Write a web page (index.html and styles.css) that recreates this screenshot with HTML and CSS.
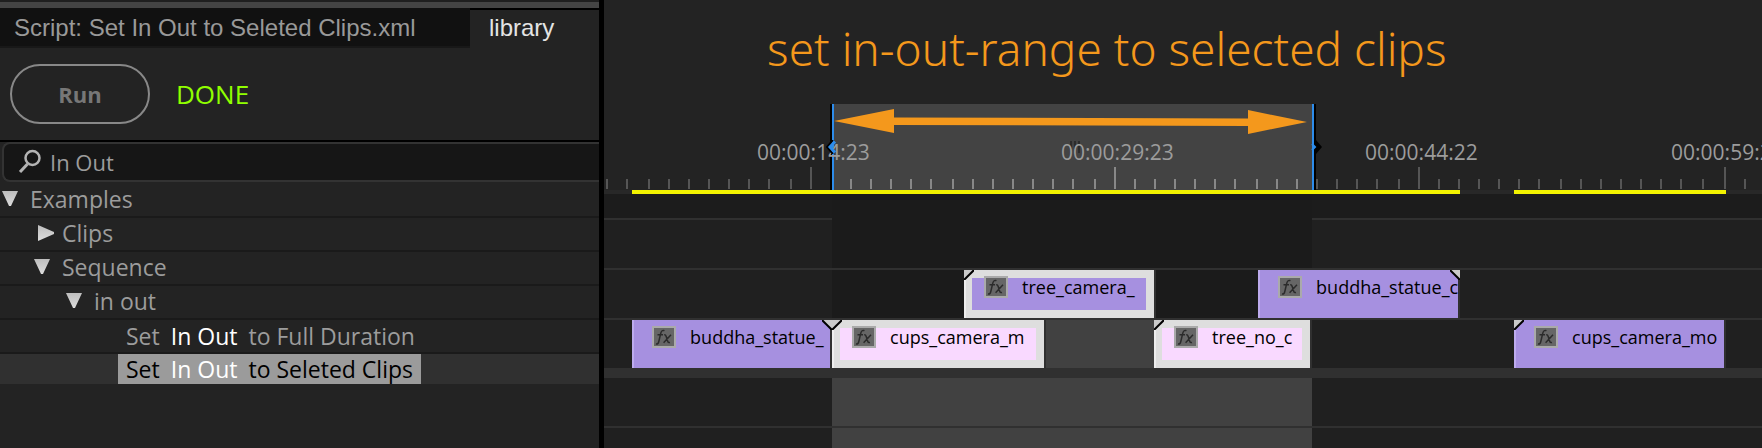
FILE: index.html
```html
<!DOCTYPE html>
<html lang="en">
<head>
<meta charset="utf-8">
<title>Set In Out to Seleted Clips</title>
<link rel="stylesheet" href="styles.css">
</head>
<body>
<svg class="defs" aria-hidden="true">
  <defs>
    <linearGradient id="metal" x1="0" y1="0" x2="0" y2="1">
      <stop offset="0" stop-color="#bdbdbd"/><stop offset="1" stop-color="#dcdcdc"/>
    </linearGradient>
    <symbol id="open" viewBox="0 0 16 16"><path d="M0 0H16L9 15H7Z" fill="url(#metal)"/></symbol>
    <symbol id="closed" viewBox="0 0 16 16"><path d="M0 0L16 7V9L0 16Z" fill="url(#metal)"/></symbol>
    <symbol id="fx" viewBox="0 0 24 22">
      <path d="M1 1H23V21H1Z" fill="#666" stroke="#aaa" stroke-width="2"/>
      <path d="M12.5 4.6Q9.600 3.600 8.800 7.200L6.800 15.500Q6.200 18.500 4 17.800M5.500 8.700H11M12.200 8.700Q13.600 8.500 14.200 10.500L15.700 15.200Q16.200 17 18 16.500M19 8.700L11.600 16.800" fill="none" stroke="#2b2b2b" stroke-width="1.500"/>
    </symbol>
    <symbol id="fold" viewBox="0 0 10 10"><path d="M0 0H10L0 10Z" fill="#cacaca"/><path d="M10.500 -.5L-.5 10.500" stroke="#000" stroke-width="2"/></symbol>
  </defs>
</svg>
<div class="app">
  <aside class="panel">
    <nav class="tabs">
      <button class="tab">Script: Set In Out to Seleted Clips.xml</button>
      <button class="tab active">library</button>
    </nav>
    <div class="toolbar">
      <button class="run">Run</button>
      <output class="status">DONE</output>
    </div>
    <label class="search">
      <svg class="lens" viewBox="0 0 24 26" role="img" aria-label="Search"><circle cx="14.500" cy="9" r="7" fill="none" stroke="#b4b4b4" stroke-width="2.500"/><path d="M9.500 15L2 23" stroke="#b4b4b4" stroke-width="3"/></svg>
      <input type="text" value="In Out" aria-label="Search scripts">
    </label>
    <ul class="tree">
      <li class="row"><svg class="arrow"><use href="#open"/></svg>Examples</li>
      <li class="row level1"><svg class="arrow right"><use href="#closed"/></svg>Clips</li>
      <li class="row level1"><svg class="arrow"><use href="#open"/></svg>Sequence</li>
      <li class="row level2"><svg class="arrow"><use href="#open"/></svg>in out</li>
      <li class="row leaf"><span class="item"><span>Set</span><b>In Out</b><span>to Full Duration</span></span></li>
      <li class="row leaf selected"><span class="item"><span>Set</span><b>In Out</b><span>to Seleted Clips</span></span></li>
    </ul>
  </aside>

  <main class="timeline">
    <header class="ruler">
      <h1 class="caption">set in-out-range to selected clips</h1>
      <div class="range-head"></div>
      <svg class="grip" viewBox="0 0 10 12"><path d="M1 0V8M5 0V8M9 0V12" stroke="#2c2c2c" stroke-width="2"/></svg>
      <time class="code c1">00:00:14:23</time>
      <time class="code c2">00:00:29:23</time>
      <time class="code c3">00:00:44:22</time>
      <time class="code c4">00:00:59:22</time>
      <svg class="ticks" viewBox="0 0 1158 22" fill="none" stroke-width="2">
        <path stroke="#555" d="M3 12v10M23 12v10M45 12v10M65 12v10M85 12v10M105 12v10M125 12v10M145 12v10M165 12v10M187 12v10M207 0v22M713 12v10M733 12v10M753 12v10M773 12v10M795 12v10M815 0v22M835 12v10M855 12v10M875 12v10M895 12v10M915 12v10M935 12v10M957 12v10M977 12v10M997 12v10M1017 12v10M1037 12v10M1057 12v10M1077 12v10M1099 12v10M1121 0v22M1141 12v10"/>
        <path stroke="#888" d="M247 12v10M267 12v10M287 12v10M307 12v10M327 12v10M349 12v10M369 12v10M389 12v10M409 12v10M429 12v10M449 12v10M469 12v10M491 12v10M511 0v22M531 12v10M551 12v10M571 12v10M591 12v10M611 12v10M631 12v10M653 12v10M673 12v10M693 12v10"/>
      </svg>
      <svg class="span-arrow" viewBox="0 0 474 26"><path d="M0 13L60 1V9.500L414 10.500V2L473 14L414 26V18L60 17V25Z" fill="#f4981c"/></svg>
      <svg class="handle in" viewBox="0 0 12 14"><path d="M7 0L1 7L7 14" fill="none" stroke="#000" stroke-width="2"/><path d="M9 1.500L4 7L9 12.500" fill="none" stroke="#2d8ceb" stroke-width="3"/></svg>
      <svg class="handle out" viewBox="0 0 12 14"><path d="M4 0H6L12 7L6 14H4Z" fill="#000"/><path d="M2 4L5 7L2 10" fill="none" stroke="#2d8ceb" stroke-width="2"/></svg>
      <div class="render r1"></div>
      <div class="render r2"></div>
    </header>

    <section class="track gap"></section>
    <section class="track v3"></section>
    <section class="track v2">
      <article class="clip selected tree-cam"><svg class="fold"><use href="#fold"/></svg><svg class="fx"><use href="#fx"/></svg><span>tree_camera_</span></article>
      <article class="clip buddha-b"><svg class="fold end"><use href="#fold"/></svg><svg class="fx"><use href="#fx"/></svg><span>buddha_statue_c</span></article>
    </section>
    <section class="track v1">
      <article class="clip buddha-a"><svg class="fold end"><use href="#fold"/></svg><svg class="fx"><use href="#fx"/></svg><span>buddha_statue_</span></article>
      <article class="clip selected pink cups-a"><svg class="fold"><use href="#fold"/></svg><svg class="fx"><use href="#fx"/></svg><span>cups_camera_m</span></article>
      <article class="clip selected pink tree-no"><svg class="fold"><use href="#fold"/></svg><svg class="fx"><use href="#fx"/></svg><span>tree_no_c</span></article>
      <article class="clip cups-b"><svg class="fold"><use href="#fold"/></svg><svg class="fx"><use href="#fx"/></svg><span>cups_camera_mo</span></article>
    </section>
    <div class="split"></div>
    <section class="track a1"></section>
    <section class="track a2"></section>
  </main>
</div>
</body>
</html>
```

FILE: styles.css
```css
* { box-sizing: border-box; }
body { margin: 0; background: #232323; font-family: "Open Sans", "Noto Sans", sans-serif; }
button, input { font: inherit; border: 0; margin: 0; }
.defs { position: absolute; width: 0; height: 0; }
.app { display: flex; min-height: 100vh; overflow: hidden; }

/* Script panel */
.panel { flex: 0 0 34%; display: flex; flex-direction: column; border-top: 2px solid #1f1f1f; color: #9c9c9c; font-size: 22px; }
.tabs { display: flex; border-top: 6px solid #444; background: #111; font-family: "Liberation Sans", Arial, sans-serif; font-size: 24px; }
.tab { flex: 0 0 470px; height: 40px; padding: 0 14px; border-top: 2px solid #111; border-bottom: 2px solid #181818; background: #111; color: #999; text-align: left; white-space: nowrap; }
.tab.active { flex: 1; padding: 0 19px; border-top-color: #000; border-bottom-color: #232323; background: #232323; color: #e4e4e4; }
.toolbar { display: flex; align-items: center; gap: 26px; height: 94px; padding: 0 10px; border-bottom: 2px solid #000; }
.run { width: 140px; height: 60px; border: 2px solid #888; border-radius: 30px; background: transparent; color: #777; font-weight: 700; }
.status { color: #90ff00; font-size: 26px; }
.search { display: flex; align-items: center; gap: 8px; height: 40px; margin-left: 2px; padding-left: 14px; border: 2px solid #333; border-right: 0; border-radius: 8px 0 0 8px; background: #161616; }
.lens { width: 24px; height: 26px; }
.search input { flex: 1; min-width: 0; padding: 0; outline: 0; background: transparent; color: #9c9c9c; }
.tree { list-style: none; margin: 0; padding: 2px 0 0; font-size: 23px; }
.row { display: flex; align-items: center; gap: 12px; height: 34px; padding: 0 0 2px 2px; border-bottom: 2px solid #1a1a1a; white-space: nowrap; }
.level1 { padding-left: 34px; }
.level2 { padding-left: 66px; }
.leaf { padding-left: 118px; padding-bottom: 0; }
.row.selected { height: 30px; border: 0; background: #303030; }
.arrow { width: 16px; height: 16px; }
.arrow.right { margin: 0 -4px 0 4px; }
.item { display: flex; gap: 11px; height: 30px; padding: 0 8px; line-height: 30px; }
.item b { color: #fff; font-weight: 400; }
.selected .item { background: #9b9b9b; color: #000; }

/* Timeline canvas */
.timeline { flex: 1; min-width: 0; position: relative; display: flex; flex-direction: column; border-left: 5px solid #000; overflow: hidden; }
.ruler { position: relative; height: 194px; border-bottom: 4px solid #282828; }
.caption { position: absolute; left: 163px; top: 16px; margin: 0; color: #f4981c; font: 300 46px/64px "Noto Sans", sans-serif; white-space: nowrap; }
.range-head { position: absolute; left: 226px; top: 104px; width: 486px; height: 86px; background: #434343; border: solid #000; border-width: 0 2px; box-shadow: inset 2px 0 #2d8ceb, inset -2px 0 #2d8ceb; }
.grip { position: absolute; left: 466px; top: 141px; width: 10px; height: 12px; }
.code { position: absolute; top: 138px; color: #9c9c9c; font-size: 21px; line-height: 28px; }
.c1 { left: 153px; } .c2 { left: 457px; } .c3 { left: 761px; } .c4 { left: 1067px; }
.ticks { position: absolute; left: 0; top: 167px; width: 1158px; height: 22px; }
.span-arrow { position: absolute; left: 230px; top: 108px; width: 474px; height: 26px; }
.handle { position: absolute; top: 140px; width: 12px; height: 14px; }
.in { left: 222px; } .out { left: 706px; }
.render { position: absolute; top: 190px; height: 4px; background: #f2f200; }
.r1 { left: 28px; width: 828px; } .r2 { left: 910px; width: 212px; }

.track { position: relative; height: 50px; border-bottom: 2px solid #303030; background: linear-gradient(#1b1b1b, #1b1b1b) 228px 0 / 480px 100% no-repeat #202020; }
.gap { height: 26px; background-color: #1c1c1c; }
.gap::after { content: ""; position: absolute; left: 228px; top: 24px; width: 480px; height: 2px; background: #1b1b1b; }
.v1, .a1, .a2 { background-image: linear-gradient(#414141, #414141); }
.v1 { border-bottom: 0; height: 48px; }
.split { height: 10px; background: #303030; }
.a2 { flex: 1; min-height: 20px; border: 0; }
.clip { position: absolute; top: 0; height: 48px; padding: 6px 0 0 20px; display: flex; align-items: flex-start; gap: 14px; background: #a690e0; border-left: 0; box-shadow: inset 2px 0 #bdabee, 2px 0 #303030; color: #000; font-size: 18px; line-height: 22px; white-space: nowrap; }
.clip.selected { background: linear-gradient(#a690e0, #a690e0) content-box, #dedede; padding: 8px; box-shadow: inset 2px 0 #eee, 2px 0 #303030; }
.clip.pink { background: linear-gradient(#f9d9ff, #f9d9ff) content-box, #dedede; }
.clip.selected .fx { margin: -2px 0 0 12px; }
.clip.selected span { margin-top: -2px; }
.fx { flex: none; width: 24px; height: 22px; }
.fold { position: absolute; left: 0; top: 0; width: 10px; height: 10px; }
.fold.end { left: auto; right: -2px; transform: scaleX(-1); }
.tree-cam { left: 360px; width: 190px; }
.buddha-b { left: 654px; width: 200px; }
.buddha-a { left: 28px; width: 198px; }
.cups-a { left: 228px; width: 212px; }
.tree-no { left: 550px; width: 156px; }
.cups-b { left: 910px; width: 210px; }
```
